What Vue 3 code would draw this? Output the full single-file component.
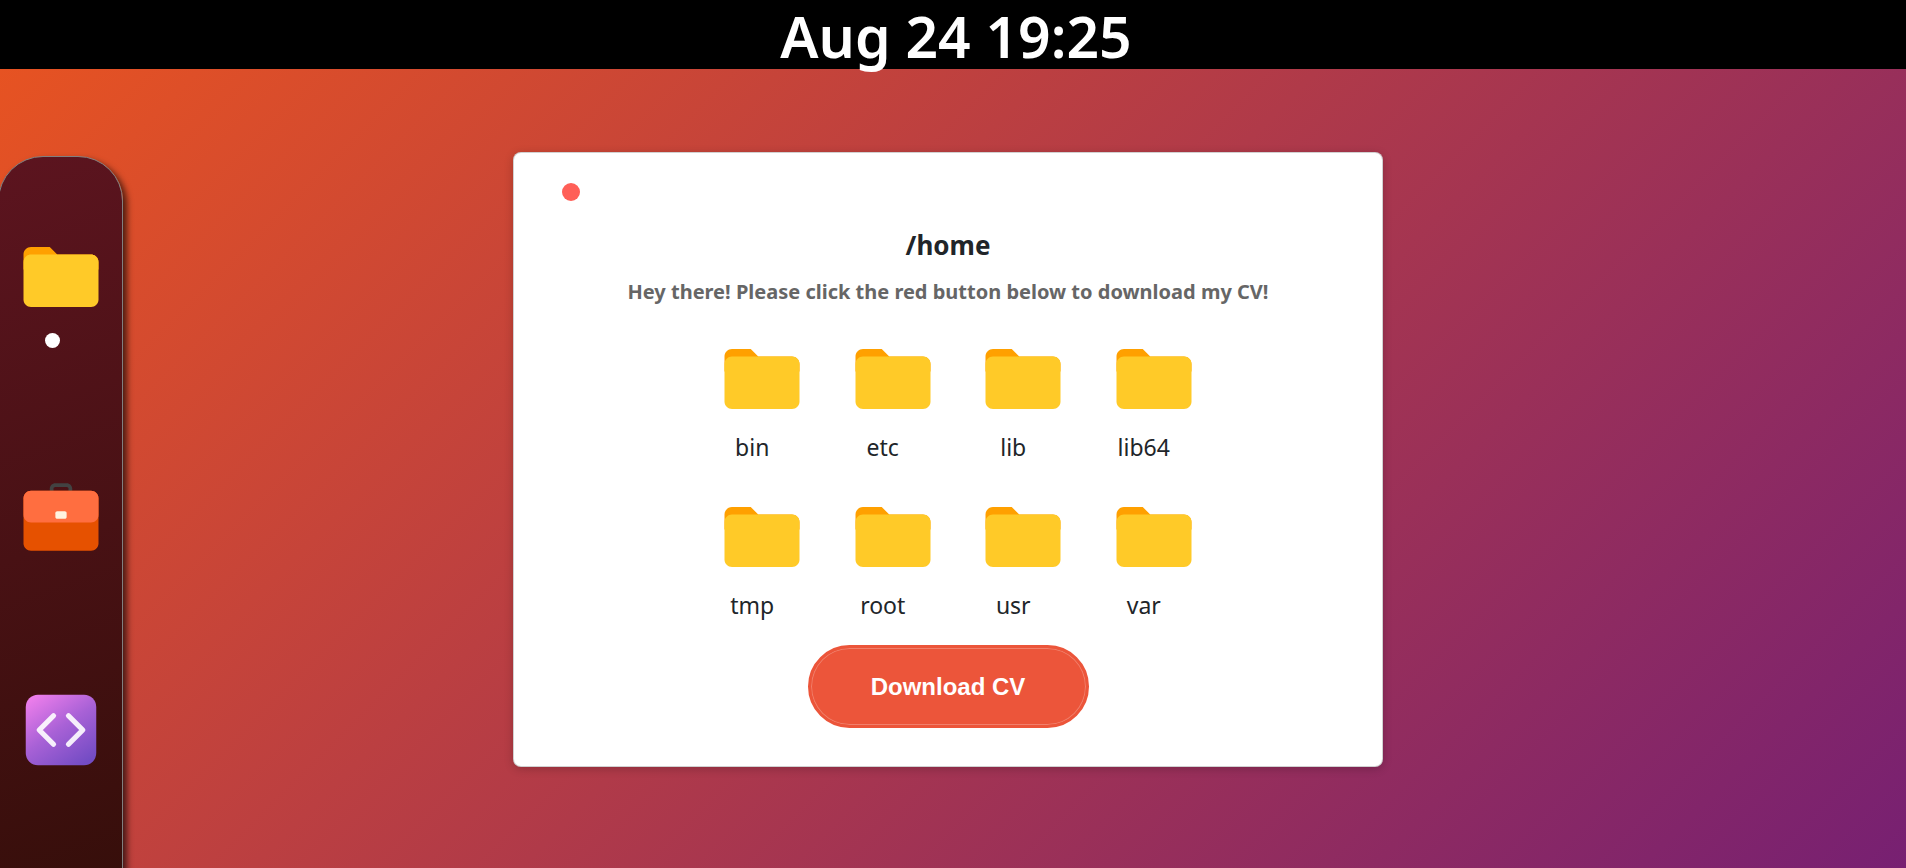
<script setup>
const folders = ['bin', 'etc', 'lib', 'lib64', 'tmp', 'root', 'usr', 'var']
</script>

<template>
  <div class="desktop">
    <svg class="defs" aria-hidden="true">
      <symbol id="folder" viewBox="0 0 48 48">
        <path fill="#ffa000" d="M40,12H22l-4-4H8c-2.2,0-4,1.8-4,4v8h40v-4C44,13.8,42.2,12,40,12z" />
        <path fill="#ffca28" d="M40,12H8c-2.2,0-4,1.8-4,4v20c0,2.2,1.8,4,4,4h32c2.2,0,4-1.8,4-4V16C44,13.8,42.2,12,40,12z" />
      </symbol>
    </svg>

    <header class="topbar">
      <time class="clock">Aug 24 19:25</time>
    </header>

    <main class="workspace">
      <nav class="dock" aria-label="Dock">
        <button class="dock-item" type="button" aria-label="Home">
          <svg class="icon"><use href="#folder" /></svg>
          <span class="dot"></span>
        </button>
        <button class="dock-item" type="button" aria-label="Work">
          <svg class="icon" viewBox="0 0 48 48">
            <path fill="#424242" d="M27,7h-6c-1.7,0-3,1.3-3,3v3h2v-3c0-0.6,0.4-1,1-1h6c0.6,0,1,0.4,1,1v3h2v-3C30,8.3,28.7,7,27,7z" />
            <path fill="#e65100" d="M40,43H8c-2.2,0-4-1.8-4-4V15c0-2.2,1.8-4,4-4h32c2.2,0,4,1.8,4,4v24C44,41.2,42.2,43,40,43z" />
            <path fill="#ff6e40" d="M40,28H8c-2.2,0-4-1.8-4-4v-9c0-2.2,1.8-4,4-4h32c2.2,0,4,1.8,4,4v9C44,26.2,42.2,28,40,28z" />
            <path fill="#fff3e0" d="M26,26h-4c-0.6,0-1-0.4-1-1v-2c0-0.6,0.4-1,1-1h4c0.6,0,1,0.4,1,1v2C27,25.6,26.6,26,26,26z" />
          </svg>
        </button>
        <button class="dock-item" type="button" aria-label="Code">
          <svg class="icon" viewBox="0 0 48 48">
            <defs>
              <linearGradient id="code-fill" x1="0.1" y1="0" x2="0.8" y2="1">
                <stop offset="0" stop-color="#f07fec" />
                <stop offset="0.5" stop-color="#a861d6" />
                <stop offset="1" stop-color="#734cc4" />
              </linearGradient>
            </defs>
            <rect x="5.2" y="5.2" width="37.6" height="37.6" rx="6.5" fill="url(#code-fill)" />
            <path
              d="M20,16.4L12.4,24l7.6,7.6M28,16.4l7.6,7.6L28,31.6"
              fill="none" stroke="#fff" stroke-opacity="0.9" stroke-width="2.8"
              stroke-linecap="round" stroke-linejoin="round"
            />
          </svg>
        </button>
      </nav>

      <section class="window">
        <button class="close" type="button" aria-label="Close"></button>
        <h1 class="title">/home</h1>
        <p class="subtitle">Hey there! Please click the red button below to download my CV!</p>
        <ul class="folders">
          <li v-for="name in folders" :key="name" class="folder">
            <svg class="icon folder-icon" aria-hidden="true"><use href="#folder" /></svg>
            <span class="label">{{ name }}</span>
          </li>
        </ul>
        <button class="download" type="button">Download CV</button>
      </section>
    </main>
  </div>
</template>

<style>
body {
  margin: 0;
}
</style>

<style scoped>
.desktop {
  box-sizing: border-box;
  display: flex;
  flex-direction: column;
  height: 100vh;
  overflow: hidden;
  background: linear-gradient(135deg, #e95420, #772072);
  font-family: "Noto Sans", "Open Sans", sans-serif;
  color: #212529;
}
.defs {
  position: absolute;
  width: 0;
  height: 0;
}
.topbar {
  height: 69px;
  flex: none;
  background: #000;
  text-align: center;
}
.clock {
  display: block;
  padding-left: 6px;
  color: #fff;
  font-size: 57px;
  font-weight: 600;
  line-height: 72px;
}
.workspace {
  flex: 1;
  display: grid;
  grid-template-columns: 1fr 870px 1fr;
  min-height: 0;
}
.dock {
  box-sizing: border-box;
  display: grid;
  grid-template-rows: 238px 215px 1fr;
  justify-items: center;
  width: 125px;
  margin: 87px 0 -60px -2px;
  padding-top: 75px;
  border: 1px solid #808080;
  border-radius: 45px;
  background: linear-gradient(160deg, #5c141f, #340e09);
  box-shadow: 4px 4px 6px rgba(0, 0, 0, 0.65);
}
.dock-item {
  display: flex;
  flex-direction: column;
  align-items: flex-start;
  align-self: start;
  padding: 0;
  border: 0;
  background: none;
}
.icon {
  display: block;
  width: 90px;
  height: 90px;
}
.dot {
  width: 15px;
  height: 15px;
  margin: 11px 0 0 29px;
  border-radius: 50%;
  background: #fff;
}
.window {
  grid-column: 2;
  box-sizing: border-box;
  display: flex;
  flex-direction: column;
  align-items: center;
  align-self: start;
  margin: 83px 5px 0 -5px;
  padding: 30px 48px 38px;
  border: 1px solid rgba(0, 0, 0, 0.18);
  border-radius: 8px;
  background: #fff;
  box-shadow: 0 2px 10px rgba(0, 0, 0, 0.2);
}
.close {
  align-self: flex-start;
  width: 18px;
  height: 18px;
  padding: 0;
  border: 0;
  border-radius: 50%;
  background: #ff5f57;
}
.title {
  margin: 26px 0 0;
  font-size: 26px;
  font-weight: 700;
  line-height: 36px;
}
.subtitle {
  margin: 15px 0 0;
  color: #666;
  font-size: 20px;
  font-weight: 700;
  line-height: 28px;
}
.folders {
  display: grid;
  grid-template-columns: repeat(4, 1fr);
  row-gap: 27px;
  width: 522px;
  margin: 28px 0 22px;
  padding: 0;
  list-style: none;
}
.folder {
  display: flex;
  flex-direction: column;
  align-items: center;
}
.folder-icon {
  margin-left: 20px;
}
.label {
  margin-top: 5px;
  font-size: 23px;
  line-height: 36px;
}
.download {
  width: 281px;
  height: 83px;
  border: 3px solid #ec553a;
  border-radius: 42px;
  background: #ec553a;
  box-shadow: inset 0 0 0 1px rgba(255, 255, 255, 0.25);
  color: #fff;
  font-family: "Liberation Sans", Arial, sans-serif;
  font-size: 24px;
  font-weight: 700;
}
</style>
